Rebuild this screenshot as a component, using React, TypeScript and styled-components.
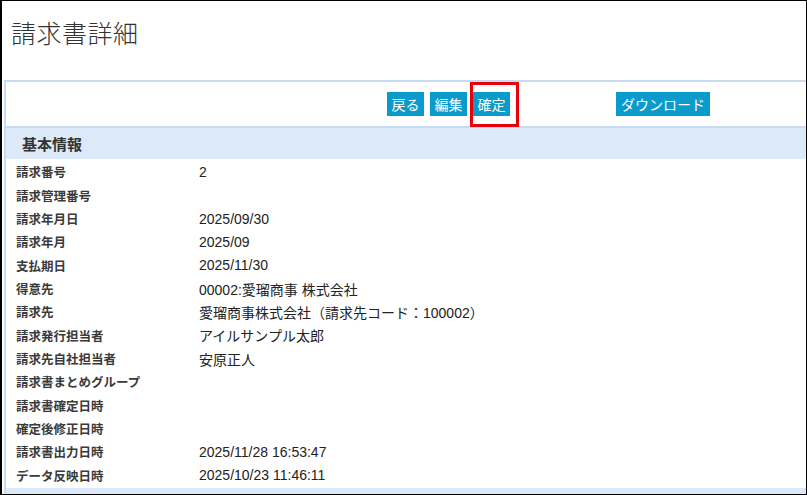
import React from "react";
import styled, { createGlobalStyle } from "styled-components";

const GlobalStyle = createGlobalStyle`
  html, body { margin: 0; padding: 0; background: #fff; }
  body { font-family: "Liberation Sans", Arial, "Noto Sans CJK JP", sans-serif; color: #333; }
  * { box-sizing: border-box; }
`;

const Frame = styled.div`
  width: 807px;
  height: 495px;
  border-style: solid;
  border-color: #000;
  border-width: 1px 1px 1px 2px;
  overflow: hidden;
  display: flex;
  flex-direction: column;
`;

const Title = styled.h1`
  margin: 0;
  height: 79px;
  padding: 15px 0 0 9px;
  font-family: "Noto Sans CJK JP", sans-serif;
  font-weight: 300;
  font-size: 25px;
  line-height: 32px;
  color: #333;
  letter-spacing: 0.5px;
`;

const Panel = styled.div`
  margin-left: 2px;
  width: 1100px;
  border-top: 2px solid #c5dcf2;
  border-left: 2px solid #c5dcf2;
  display: flex;
  flex-direction: column;
`;

const Toolbar = styled.div`
  height: 46px;
  display: flex;
  align-items: center;
  padding-left: 381px;
  border-bottom: 2px solid #c5dcf2;
`;

const ButtonGroup = styled.div`
  display: flex;
  gap: 6px;
  margin-right: 106px;
`;

const Button = styled.button<{ $wide?: boolean }>`
  position: relative;
  height: 24px;
  padding: 0 ${(p) => (p.$wide ? "5px" : "4.5px")};
  border: none;
  background: #0a9acb;
  color: #fff;
  font-family: "Noto Sans CJK JP", sans-serif;
  font-size: 14px;
  line-height: 24px;
  cursor: pointer;
`;

const Highlight = styled.span`
  position: absolute;
  left: -3px;
  top: -10px;
  width: 49px;
  height: 45px;
  border: 3px solid #e8000b;
  pointer-events: none;
`;

const SectionHeader = styled.div`
  height: 31px;
  background: #dbe9f8;
  padding-left: 16px;
  display: flex;
  align-items: center;
  font-family: "Noto Sans CJK JP", sans-serif;
  font-weight: 700;
  font-size: 15px;
  color: #333;
`;

const Rows = styled.div`
  padding-top: 1.5px;
  display: flex;
  flex-direction: column;
`;

const Row = styled.div`
  height: 23.35px;
  display: grid;
  grid-template-columns: 183px 1fr;
  align-items: center;
  padding-left: 10px;
`;

const Label = styled.div`
  font-family: "Noto Sans CJK JP", sans-serif;
  font-weight: 700;
  font-size: 12.5px;
  color: #3a3a3a;
  white-space: nowrap;
`;

const Value = styled.div`
  font-family: "Liberation Sans", Arial, "Noto Sans CJK JP", sans-serif;
  font-size: 14px;
  color: #222;
  white-space: nowrap;
`;

const BottomBand = styled.div`
  height: 6px;
  margin-top: 1px;
  background: #dbe9f8;
`;

const rows: [string, string][] = [
  ["請求番号", "2"],
  ["請求管理番号", ""],
  ["請求年月日", "2025/09/30"],
  ["請求年月", "2025/09"],
  ["支払期日", "2025/11/30"],
  ["得意先", "00002:愛瑠商事 株式会社"],
  ["請求先", "愛瑠商事株式会社（請求先コード：100002）"],
  ["請求発行担当者", "アイルサンプル太郎"],
  ["請求先自社担当者", "安原正人"],
  ["請求書まとめグループ", ""],
  ["請求書確定日時", ""],
  ["確定後修正日時", ""],
  ["請求書出力日時", "2025/11/28 16:53:47"],
  ["データ反映日時", "2025/10/23 11:46:11"],
];

export default function App() {
  return (
    <>
      <GlobalStyle />
      <Frame>
        <Title>請求書詳細</Title>
        <Panel>
          <Toolbar>
            <ButtonGroup>
              <Button>戻る</Button>
              <Button>編集</Button>
              <Button>
                確定
                <Highlight />
              </Button>
            </ButtonGroup>
            <Button $wide>ダウンロード</Button>
          </Toolbar>
          <SectionHeader>基本情報</SectionHeader>
          <Rows>
            {rows.map(([label, value]) => (
              <Row key={label}>
                <Label>{label}</Label>
                <Value>{value}</Value>
              </Row>
            ))}
          </Rows>
          <BottomBand />
        </Panel>
      </Frame>
    </>
  );
}
